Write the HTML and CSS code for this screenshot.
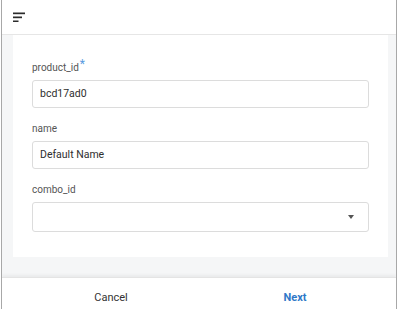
FILE: index.html
```html
<!DOCTYPE html>
<html>
<head>
<meta charset="utf-8">
<link rel="stylesheet" href="styles.css">
</head>
<body>
<div class="window">
  <header class="topbar">
    <svg class="sort-icon" width="13" height="10" viewBox="0 0 13 10">
      <rect x="0" y="0.5" width="12" height="1.7" fill="#2b2b2b"/>
      <rect x="0" y="4.5" width="9" height="1.7" fill="#2b2b2b"/>
      <rect x="0" y="8.5" width="5.5" height="1.7" fill="#2b2b2b"/>
    </svg>
  </header>
  <main class="content">
    <section class="card">
      <div class="field">
        <label class="label">product_id<span class="req">*</span></label>
        <div class="input">bcd17ad0</div>
      </div>
      <div class="field">
        <label class="label">name</label>
        <div class="input">Default Name</div>
      </div>
      <div class="field last">
        <label class="label">combo_id</label>
        <div class="input select"><span class="caret"></span></div>
      </div>
    </section>
  </main>
  <footer class="footer">
    <button class="btn">Cancel</button>
    <button class="btn primary">Next</button>
  </footer>
</div>
</body>
</html>
```
FILE: styles.css
```css
* { box-sizing: border-box; }
html, body { margin: 0; padding: 0; background: #fff; }
body { font-family: Roboto, "Liberation Sans", sans-serif; padding-left: 1px; }
.window {
  width: 396px;
  height: 309px;
  overflow: hidden;
  border-left: 1px solid #a8a8a8;
  border-right: 1px solid #a8a8a8;
  display: flex;
  flex-direction: column;
}
.topbar {
  height: 35px;
  flex: none;
  border-bottom: 1px solid #e6e6e6;
  display: flex;
  align-items: center;
  padding-left: 11px;
  padding-bottom: 1px;
}
.sort-icon { display: block; }
.content {
  flex: none;
  height: 242px;
  background: #f5f6f7;
  padding: 0 8px 20px 11px;
}
.card {
  background: #fff;
  height: 222px;
  padding: 25px 19px 0 19px;
}
.field { margin-bottom: 14px; }
.field.last { margin-bottom: 0; }
.label {
  display: block;
  font-size: 10px;
  line-height: 14px;
  color: #555;
  margin-bottom: 5px;
}
.req {
  color: #5a9be0;
  font-size: 12px;
  position: relative;
  top: -3px;
  margin-left: 1px;
}
.input {
  height: 28px;
  border: 1px solid #dcdcdc;
  border-radius: 3px;
  padding: 0 7px;
  font-size: 10.5px;
  color: #2e2e2e;
  line-height: 26px;
  display: flex;
  align-items: center;
}
.input.select {
  height: 30px;
  justify-content: flex-end;
  padding-right: 14px;
}
.caret {
  width: 0;
  height: 0;
  border-left: 3.5px solid transparent;
  border-right: 3.5px solid transparent;
  border-top: 4px solid #555;
}
.footer {
  flex: none;
  height: 32px;
  border-top: 1px solid #e4e4e4;
  box-shadow: 0 -2px 3px rgba(0,0,0,0.05);
  display: grid;
  grid-template-columns: 1fr 1fr;
  padding: 0 9px 0 17px;
  position: relative;
}
.btn {
  background: none;
  border: none;
  font-family: inherit;
  font-size: 11px;
  color: #333;
  padding: 0;
  margin-top: 13px;
  align-self: start;
  line-height: 13px;
}
.btn.primary {
  color: #2f78c8;
  font-weight: 700;
}
```
